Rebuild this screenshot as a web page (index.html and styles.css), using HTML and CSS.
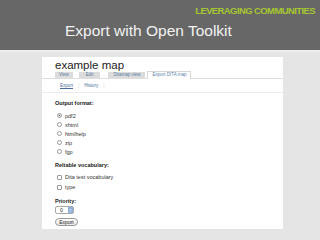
FILE: index.html
```html
<!DOCTYPE html>
<html lang="en">
<head>
  <meta charset="UTF-8">
  <title>Export with Open Toolkit</title>
  <link rel="stylesheet" href="styles.css">
</head>
<body>
  <header class="slide-head">
    <div class="tagline">LEVERAGING COMMUNITIES</div>
    <h1 class="title">Export with Open Toolkit</h1>
  </header>

  <main class="stage">
    <div class="panel">
      <h2 class="page-title">example map</h2>

      <ul class="tabs">
        <li class="tab">View</li>
        <li class="tab">Edit</li>
        <li class="tab">Ditamap view</li>
        <li class="tab active">Export DITA map</li>
      </ul>

      <div class="subtabs">
        <a class="sublink current">Export</a>
        <span class="sep">|</span>
        <a class="sublink">History</a>
        <span class="sep">|</span>
      </div>

      <div class="field-label first">Output format:</div>
      <div class="options">
        <label class="option"><input type="radio" name="format" checked> pdf2</label>
        <label class="option"><input type="radio" name="format"> xhtml</label>
        <label class="option"><input type="radio" name="format"> htmlhelp</label>
        <label class="option"><input type="radio" name="format"> zip</label>
        <label class="option"><input type="radio" name="format"> fgp</label>
      </div>

      <div class="field-label">Reltable vocabulary:</div>
      <div class="options checks">
        <label class="option"><input type="checkbox"> Dita test vocabulary</label>
        <label class="option"><input type="checkbox"> type</label>
      </div>

      <div class="field-label">Priority:</div>
      <div class="select-box"><span class="select-value">0</span><span class="select-arrows">&#8597;</span></div>

      <button class="export-btn">Export</button>
    </div>
  </main>
</body>
</html>
```

FILE: styles.css
```css
body {
  margin: 0;
  width: 320px;
  height: 240px;
  overflow: hidden;
  background-color: #e5e5e5;
  font-family: "Liberation Sans", Arial, sans-serif;
}

.slide-head {
  height: 50px;
  background-color: #676767;
  box-sizing: border-box;
  padding-top: 6px;
}
.tagline {
  text-align: right;
  padding-right: 5px;
  color: #a6c631;
  font-size: 9.5px;
  line-height: 10px;
  font-weight: bold;
  letter-spacing: -0.6px;
}
.title {
  margin: 5px 0 0 65px;
  color: #f2f2f2;
  font-size: 15.5px;
  line-height: 20px;
  font-weight: normal;
}

.stage {
  border-top: 2px solid #ededed;
  padding-top: 5px;
}
.panel {
  margin-left: 42px;
  width: 241px;
  background-color: #fff;
  padding: 2px 0 3px 0;
  color: #333;
}

.page-title {
  margin: 0 0 0 13px;
  font-size: 11.5px;
  line-height: 13px;
  font-weight: normal;
  color: #222;
}

.tabs {
  list-style: none;
  margin: 0;
  padding: 0 0 0 13px;
  display: flex;
  gap: 6px;
  height: 6px;
  border-bottom: 1px solid #dedede;
}
.tab {
  background-color: #dcdcdc;
  color: #5a7fa6;
  font-size: 4.5px;
  line-height: 6px;
  padding: 0 4px;
}
.tab:nth-child(2) { padding: 0 7px; }
.tab:nth-child(3) { padding: 0 5px; margin-left: 2px; }
.tab.active {
  background-color: #fff;
  border: 1px solid #d6d6d6;
  border-bottom: none;
  margin-top: -1px;
  height: 7px;
  margin-left: -4px;
}

.subtabs {
  height: 13px;
  border-bottom: 1px solid #ececec;
  display: flex;
  align-items: center;
  gap: 5px;
  padding-left: 18px;
  font-size: 4.5px;
  color: #4a6f99;
}
.sublink.current { text-decoration: underline; }
.sep { color: #d0d0d0; }

.field-label {
  margin: 6px 0 0 13px;
  font-size: 5.5px;
  line-height: 6px;
  font-weight: bold;
  color: #222;
}
.field-label.first { margin-top: 7px; }

.options {
  margin: 5px 0 0 15px;
  display: flex;
  flex-direction: column;
}
.option {
  height: 9px;
  display: flex;
  align-items: center;
  gap: 3px;
  font-size: 5.5px;
  color: #333;
}
.checks { margin-top: 4px; }
.checks .option { height: 10px; }

.option input {
  appearance: none;
  margin: 0;
  width: 5px;
  height: 5px;
  border: 1px solid #9a9a9a;
  box-sizing: border-box;
  background: #fff;
}
.option input[type="radio"] { border-radius: 50%; }
.option input[type="radio"]:checked {
  background: radial-gradient(circle, #555 35%, #e6e6e6 45%);
}
.option input[type="checkbox"] { border-radius: 1px; }

.select-box {
  margin: 2px 0 0 13px;
  width: 19px;
  height: 8px;
  box-sizing: border-box;
  border: 1px solid #aaa;
  border-radius: 2px;
  display: flex;
  font-size: 5px;
  line-height: 6px;
  color: #222;
}
.select-value {
  flex: 1;
  padding-left: 4px;
}
.select-arrows {
  width: 5px;
  background-color: #8fb0dc;
  color: #fff;
  font-size: 5px;
  text-align: center;
}

.export-btn {
  display: block;
  margin: 4px 0 0 13px;
  width: 23px;
  height: 8px;
  padding: 0;
  border: 1px solid #999;
  border-radius: 4px;
  background: linear-gradient(#fff, #e8e8e8);
  font-family: "Liberation Sans", Arial, sans-serif;
  font-size: 5px;
  line-height: 6px;
  color: #222;
}
```
